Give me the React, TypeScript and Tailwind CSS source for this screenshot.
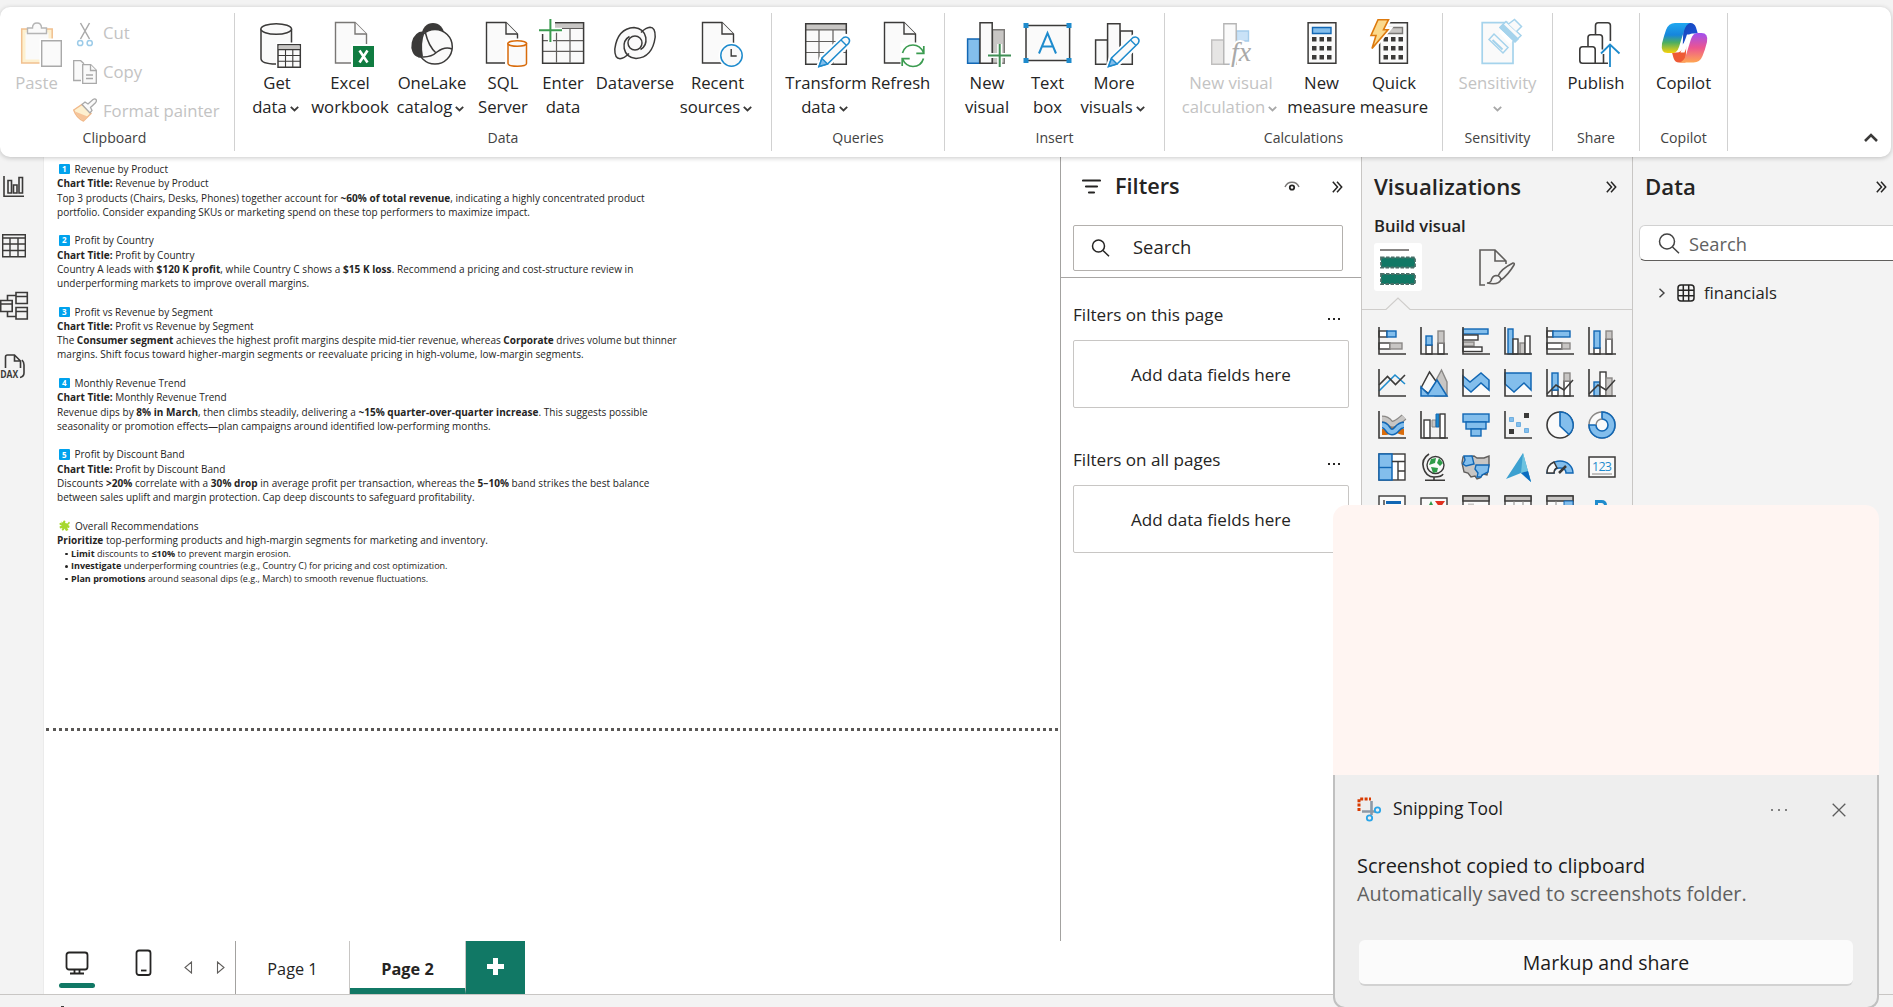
import React from 'react';

const INK = '#3b3a39';
const BLUE = '#1e8bcd';

/* ---------- Ribbon ---------- */

const Chev = ({ className = '' }: { className?: string }) => (
  <svg className={className} width="9" height="6" viewBox="0 0 9 6" fill="none" stroke="currentColor" strokeWidth="1.8">
    <path d="M.8 .8 4.5 4.5 8.2 .8" />
  </svg>
);

type BtnProps = {
  w: string;
  c: number;
  l1: string;
  l2?: string;
  chev?: boolean;
  dim?: boolean;
  children: React.ReactNode;
};

const RibbonButton = ({ w, c, l1, l2, chev, dim, children }: BtnProps) => (
  <div className={`flex shrink-0 flex-col items-center whitespace-nowrap text-[16.7px] leading-6 ${w} ${dim ? 'text-[#c3c3c3]' : 'text-[#242424]'}`}>
    <svg className="shrink-0" width="60" height="54" viewBox={`${c - 30} 17 60 54`} fill="none">
      {children}
    </svg>
    <div className="h-6">{l1}</div>
    <div className={`flex h-6 items-center gap-[3px] ${l2 && chev ? '-ml-[3px]' : ''}`}>
      {l2 && <span>{l2}</span>}
      {chev && <Chev className={dim ? 'mt-1 text-[#a8a8a8]' : 'mt-1 text-[#3b3a39]'} />}
    </div>
  </div>
);

const Group = ({ w, name, pad = '', labelPad = '', children }: { w: string; name: string; pad?: string; labelPad?: string; children: React.ReactNode }) => (
  <div className={`flex h-[138px] shrink-0 flex-col border-r border-[#d1d1d1] ${w}`}>
    <div className={`flex h-[113px] pt-1 ${pad}`}>{children}</div>
    <div className={`text-center text-[14.1px] leading-6 text-[#424242] ${labelPad}`}>{name}</div>
  </div>
);

const Page = ({ x, stroke = INK }: { x: number; stroke?: string }) => (
  <g stroke={stroke} strokeWidth="1.4" fill="#fafafa">
    <path d={`M${x} 22.5h19.5l11.5 11.5v29h-31z`} />
    <path d={`M${x + 19.5} 22.5v11.5h11.5`} />
  </g>
);

const Pencil = ({ x }: { x: number }) => (
  <g transform={`translate(${x} 0)`}>
    <path d="M0 67 3 58 25 37q3-2 5.500 1t.5 5.500L9.500 64.500z" fill="#fafafa" stroke="#fff" strokeWidth="4.500" />
    <path d="M.5 66.500 3.500 58 25 37.500q3-1.500 5 .7t.2 5L9 64z" fill="#fafafa" stroke={BLUE} strokeWidth="1.500" />
    <path d="M.5 66.500 3.500 58.500 9 64z" fill="#83beec" stroke={BLUE} strokeWidth="1.400" />
    <path d="M22.500 40l5.500 5.500" stroke={BLUE} strokeWidth="1.400" />
  </g>
);

const KeyDots = ({ x }: { x: number }) => (
  <g fill={INK}>
    {[0, 1, 2].map((r) =>
      [0, 1, 2].map((k) => <rect key={`${r}${k}`} x={x + k * 7.500} y={37 + r * 9} width="4.500" height="4.500" />),
    )}
  </g>
);

const Ribbon = () => (
  <div className="relative z-10 flex h-[150px] w-[1891px] rounded-[10px] bg-white pt-1.5 shadow-[0_1px_5px_rgba(0,0,0,0.22)]">
    <Group w="w-[235px]" name="Clipboard" labelPad="pr-[5px]">
      <RibbonButton w="w-[73px]" c={36} l1="Paste" dim>
        <path d="M20.700 29h30.500v34H20.700z" fill="#fdf0d0" stroke="#f1c08f" strokeWidth="1.500" />
        <path d="M24.500 32.500h23v27h-23z" fill="#fafafa" />
        <path d="M26.500 33.500v-5.500h5q0-5 4.500-5t4.500 5h5v5.500z" fill="#fafafa" stroke="#b5b5b5" strokeWidth="1.400" />
        <path d="M38.500 38.500h24v30h-24z" fill="#fff" />
        <path d="M40.700 40.700h19.600v25.600H40.700z" fill="#fafafa" stroke="#a9a9a9" strokeWidth="1.400" />
      </RibbonButton>
      <div className="-mt-[2px] flex flex-col text-[16.700px] text-[#c3c3c3]">
        <div className="flex h-[37px] shrink-0 items-center gap-1.5">
          <svg width="24" height="26" viewBox="73 18 24 26" fill="none">
            <path d="M80.500 20 89.500 36M89.500 20 80.500 36" stroke="#a9a9a9" strokeWidth="1.500" />
            <circle cx="80.200" cy="40" r="2.600" stroke="#9ccbe8" strokeWidth="1.500" />
            <circle cx="89.700" cy="40" r="2.600" stroke="#9ccbe8" strokeWidth="1.500" />
          </svg>
          <span className="-mt-px">Cut</span>
        </div>
        <div className="flex h-[39px] shrink-0 items-center gap-1.5">
          <svg width="24" height="26" viewBox="73 57 24 26" fill="#fafafa" stroke="#a9a9a9" strokeWidth="1.300">
            <path d="M81 78.500h-7.300V58.700h7l3.300 3" />
            <path d="M82.700 62.700h8l5.600 5.600v13H82.700z" />
            <path d="M90.500 62.700v5.800h5.800M86 73h7M86 76.500h7" />
          </svg>
          <span className="mt-px">Copy</span>
        </div>
        <div className="flex h-[39px] shrink-0 items-center gap-1.5">
          <svg width="24" height="26" viewBox="73 96 24 26" fill="none">
            <path d="M73.700 108 82 102.500l9 9-7.500 7.500q-7-3-9.800-11z" fill="#fdf0d0" stroke="#f1b98a" strokeWidth="1.400" />
            <path d="M75 109.500l12.500 5-4 4q-6-3-8.500-9z" fill="#f6c499" />
            <path d="m82 102.500 3-2.500 3 2 5-4.500q2-1.300 3 0t-.5 3.200l-5 4.800 1.500 3-2 2.500z" fill="#fafafa" stroke="#a9a9a9" strokeWidth="1.300" />
          </svg>
          <span className="mt-px">Format painter</span>
        </div>
      </div>
    </Group>

    <Group w="w-[537px]" name="Data" pad="pl-[9px]">
      <RibbonButton w="w-[66px]" c={277} l1="Get" l2="data" chev>
        <path d="M261 29.500v29q0 5.500 15 5.500t15.500-5.500v-29z" fill="#fafafa" stroke={INK} strokeWidth="1.500" />
        <ellipse cx="276.200" cy="29" rx="15.300" ry="5.300" fill="#fafafa" stroke={INK} strokeWidth="1.500" />
        <path d="M276 42.500h26v26h-26z" fill="#fff" />
        <path d="M278 44.700h22.300v22.600H278z" fill="#fafafa" stroke={INK} strokeWidth="1.500" />
        <path d="M278.700 45.400h21v4h-21z" fill="#c8c6c4" />
        <path d="M278 49.600h22.300M278 55.500h22.300M278 61.300h22.300M285.500 49.600v17.500M292.800 49.600v17.500" stroke={INK} strokeWidth="1.100" />
      </RibbonButton>
      <RibbonButton w="w-[80px]" c={350} l1="Excel" l2="workbook">
        <Page x={335.5} stroke="#797775" />
        <path d="M351 44h24v24h-24z" fill="#fff" />
        <path d="M353 46h21v21h-21z" fill="#107c41" />
        <path d="m359.500 50.500 8 12M367.500 50.500l-8 12" stroke="#fff" strokeWidth="2.600" />
      </RibbonButton>
      <RibbonButton w="w-[84px]" c={432} l1="OneLake" l2="catalog" chev>
        <circle cx="433" cy="34" r="11" fill={INK} />
        <ellipse cx="421" cy="44.500" rx="9.500" ry="13" fill={INK} transform="rotate(12 421 44.500)" />
        <circle cx="435" cy="46.800" r="17.300" fill="#fafafa" stroke={INK} strokeWidth="1.500" />
        <path d="M424.500 33q-4 10-1.500 23.500l-5-1.500q-4-12 6.500-22z" fill={INK} />
        <path d="M425.500 33q3 13 10.500 20M418 56.500q12 2 19-4.500 8-6 15-3" stroke={INK} strokeWidth="1.500" />
      </RibbonButton>
      <RibbonButton w="w-[58px]" c={503} l1="SQL" l2="Server">
        <Page x={486.5} />
        <path d="M505 38.500h24v30h-24z" fill="#fff" />
        <path d="M508 43.500v20q0 2.700 9.300 2.700t9.200-2.700v-20z" fill="#fafafa" stroke="#d86b0b" strokeWidth="1.500" />
        <ellipse cx="517.200" cy="43.500" rx="9.300" ry="2.800" fill="#fafafa" stroke="#d86b0b" strokeWidth="1.500" />
      </RibbonButton>
      <RibbonButton w="w-[62px]" c={563} l1="Enter" l2="data">
        <path d="M542.600 22.700h41v40.500h-41z" fill="#fafafa" />
        <path d="M552 23.500h31v4.500h-31z" fill="#c8c6c4" />
        <path d="M542.600 28.500h41M542.600 40.700h41M542.600 51.300h41M556.500 28.500v34M570 28.500v34" stroke="#605e5c" strokeWidth="1.200" />
        <path d="M542.600 22.700h41v40.500h-41z" stroke={INK} strokeWidth="1.500" />
        <path d="M538 17h17v17h-17z" fill="#fff" />
        <path d="M539 30.300h23M550.400 19v23" stroke="#fff" strokeWidth="5" />
        <path d="M539 30.300h23M550.400 19v23" stroke="#3a9b4f" strokeWidth="2" />
      </RibbonButton>
      <RibbonButton w="w-[82px]" c={635} l1="Dataverse">
        <g stroke={INK} strokeWidth="1.500" fill="none">
          <path d="M629 53.500Q624 58.500 620 58.700 614.500 58.500 614.800 49 617.500 28.500 634 27.500 644 28.500 645.800 37.500 647 46 640.500 49.500" fill="#fafafa" stroke="none" />
          <path d="M641 32.500Q646 27.500 650 27.300 655.500 27.500 655.200 37 652.500 57.500 636 58.500 626 57.500 624.200 48.500 623 40 629.500 36.500" fill="#fafafa" />
          <path d="M629 53.500Q624 58.500 620 58.700 614.500 58.500 614.800 49 617.500 28.500 634 27.500 644 28.500 645.800 37.500 647 46 640.500 49.500" />
          <circle cx="635" cy="43" r="7" fill="#fafafa" />
        </g>
      </RibbonButton>
      <RibbonButton w="w-[83px]" c={717.5} l1="Recent" l2="sources" chev>
        <Page x={702} />
        <circle cx="731" cy="55.500" r="13" fill="#fff" />
        <circle cx="731" cy="55.500" r="10.700" fill="#fafafa" stroke={BLUE} strokeWidth="1.500" />
        <path d="M730.700 49v7h5.500" stroke={INK} strokeWidth="1.400" />
      </RibbonButton>
    </Group>

    <Group w="w-[173px]" name="Queries" pad="pl-[14px]">
      <RibbonButton w="w-[80px]" c={826} l1="Transform" l2="data" chev>
        <path d="M805.700 23.700h40.600v40.600h-40.600z" fill="#fafafa" />
        <path d="M806 24h40v5.500h-40z" fill="#c8c6c4" />
        <path d="M805.700 29.800h40.600M805.700 41.500h40.600M805.700 52.500h40.600M819 29.800v34M833 29.800v34" stroke="#605e5c" strokeWidth="1.200" />
        <path d="M805.700 23.700h40.600v40.600h-40.600z" stroke={INK} strokeWidth="1.500" />
        <Pencil x={818.5} />
      </RibbonButton>
      <RibbonButton w="w-[69px]" c={900.5} l1="Refresh">
        <Page x={884} />
        <path d="M900 42.500h26v25h-26z" fill="#fff" />
        <path d="M902 53q2.500-8 10.500-8 7 0 10.500 7.500M923 58.500q-2.500 8-10.500 8-7 0-10.500-7.500M923.300 46v7.300h-7.500M901.700 66v-7.300h7.500" stroke="#3a9b4f" strokeWidth="1.700" />
      </RibbonButton>
    </Group>

    <Group w="w-[220px]" name="Insert" pad="pl-[17px]">
      <RibbonButton w="w-[50px]" c={987} l1="New" l2="visual">
        <path d="M992.500 29.700h11.800v33.500h-11.800z" fill="#c8c6c4" stroke="#797775" strokeWidth="1.400" />
        <path d="M967.600 39h12v24.200h-12z" fill="#83beec" stroke="#1267b4" strokeWidth="1.500" />
        <path d="M980 22.700h12.200v40.500H980z" fill="#fafafa" stroke={INK} strokeWidth="1.500" />
        <path d="M988 55.600h23M999.700 44v23" stroke="#fff" strokeWidth="5" />
        <path d="M988 55.600h23M999.700 44v23" stroke="#3f8f55" strokeWidth="2" />
      </RibbonButton>
      <RibbonButton w="w-[71px]" c={1047.5} l1="Text" l2="box">
        <path d="M1025.500 25.600h43.600v34.800h-43.600z" fill="#fafafa" stroke={INK} strokeWidth="1.500" />
        <path d="M1023 23h5v5h-5zM1066 23h5v5h-5zM1023 58h5v5h-5zM1066 58h5v5h-5z" fill={BLUE} />
        <path d="M1038.500 53.500 1047 33l8.500 20.500M1041.500 46.500h11" stroke={BLUE} strokeWidth="2" />
      </RibbonButton>
      <RibbonButton w="w-[62px]" c={1114} l1="More" l2="visuals" chev>
        <path d="M1120 31h12.300v33.300H1120z" fill="#fafafa" stroke={INK} strokeWidth="1.500" />
        <path d="M1095.600 40h12v24.300h-12z" fill="#fafafa" stroke={INK} strokeWidth="1.500" />
        <path d="M1107.600 23.700h12.400v40.600h-12.400z" fill="#fafafa" stroke={INK} strokeWidth="1.500" />
        <Pencil x={1108} />
      </RibbonButton>
    </Group>

    <Group w="w-[278px]" name="Calculations" pad="pl-[14px]">
      <RibbonButton w="w-[104px]" c={1231} l1="New visual" l2="calculation" chev dim>
        <path d="M1211.700 40h12v24.300h-12z" fill="#e6e5e4" stroke="#c0bfbe" strokeWidth="1.400" />
        <path d="M1236.500 31h12v10h-12z" fill="#c9e2f7" stroke="#a5cdec" strokeWidth="1.400" />
        <path d="M1223.800 23.700h12.400v40.600h-12.400z" fill="#fafafa" stroke="#b5b5b5" strokeWidth="1.400" />
        <text x="1231" y="61" fontFamily="Liberation Serif" fontStyle="italic" fontSize="28" fill="#a9a9a9" stroke="#fff" strokeWidth="4" paintOrder="stroke">fx</text>
      </RibbonButton>
      <RibbonButton w="w-[77px]" c={1321.5} l1="New" l2="measure">
        <path d="M1307.600 22.700h27.800v40.600h-27.800z" fill="#fafafa" stroke={INK} strokeWidth="1.500" />
        <path d="M1312 27.500h18.500v6H1312z" fill="#83beec" stroke="#1267b4" strokeWidth="1.400" />
        <KeyDots x={1311.5} />
      </RibbonButton>
      <RibbonButton w="w-[68px]" c={1394} l1="Quick" l2="measure">
        <path d="M1379.600 22.700h27.800v40.600h-27.800z" fill="#fafafa" stroke={INK} strokeWidth="1.500" />
        <path d="M1384 27.500h18.500v6H1384z" fill="#c8c6c4" stroke="#797775" strokeWidth="1.400" />
        <KeyDots x={1383.5} />
        <path d="M1378 19.500h11l-5 9.500h4.500l-16 19.500 3.500-13h-5z" fill="#fff" stroke="#fff" strokeWidth="5" />
        <path d="M1378 19.700h10.500l-5 10h4.500l-16 18.800 4-13h-5z" fill="#fbd98b" stroke="#dd7a0e" strokeWidth="1.600" />
      </RibbonButton>
    </Group>

    <Group w="w-[110px]" name="Sensitivity" pad="justify-center">
      <RibbonButton w="w-[90px]" c={1497.5} l1="Sensitivity" chev dim>
        <path d="M1481.700 22.700h30.800v40.600h-30.800z" fill="#fafafa" stroke="#a5d3ec" strokeWidth="1.700" />
        <path d="m1498 32 8-9 8-6 10 8-6 10-9 9z" fill="#fff" />
        <g stroke="#a5d3ec" strokeWidth="1.500" fill="#fafafa">
          <path d="m1488.500 39.500 5-5.500 14 13.500-5 5.500z" />
          <path d="m1492 40 10 9.500" strokeWidth="2" />
          <path d="m1499.500 27.500 6-6 15 14-6 6z" />
          <path d="m1499.500 27.500 3-3 15 14.500-3 3z" fill="#a5d3ec" />
          <path d="m1508 24 6-4.500 7 7-5 5" />
        </g>
      </RibbonButton>
    </Group>

    <Group w="w-[87px]" name="Share" pad="justify-center">
      <RibbonButton w="w-[80px]" c={1596} l1="Publish">
        <g stroke={INK} strokeWidth="1.600" fill="none">
          <path d="M1595.500 35v-9.500q0-2.700 2.700-2.700h9.500q2.700 0 2.700 2.700V41" />
          <path d="M1588 47v-9.500q0-2.700 2.700-2.700h9q2.700 0 2.700 2.700v12M1603.500 54v9.300" />
          <path d="M1608 63.300h-25.500q-2.700 0-2.700-2.700V49.500q0-2.700 2.700-2.700h10q2.700 0 2.700 2.700v13.700" />
        </g>
        <path d="M1610 67V44.500M1601 53.500l9-9 9.500 9" stroke={BLUE} strokeWidth="1.800" />
      </RibbonButton>
    </Group>

    <Group w="w-[88px]" name="Copilot" pad="justify-center">
      <RibbonButton w="w-[80px]" c={1683.5} l1="Copilot">
        <defs>
          <linearGradient id="cpA" x1="0" y1="0" x2="0" y2="1">
            <stop offset="0" stopColor="#20a8f0" />
            <stop offset=".4" stopColor="#1685dc" />
            <stop offset=".65" stopColor="#4cae62" />
            <stop offset="1" stopColor="#f8d20a" />
          </linearGradient>
          <linearGradient id="cpB" x1="0" y1="0" x2="0" y2="1">
            <stop offset="0" stopColor="#a04ff0" />
            <stop offset=".5" stopColor="#ec5590" />
            <stop offset="1" stopColor="#ffa652" />
          </linearGradient>
          <linearGradient id="cpC" x1="0" y1="0" x2="1" y2="1">
            <stop offset="0" stopColor="#1546b8" />
            <stop offset="1" stopColor="#1d56e0" />
          </linearGradient>
        </defs>
        <path d="M1683 23h7q4 0 5.500 4.500l1.800 6h-5q-4 0-6 5l-4 6z" fill="url(#cpC)" />
        <path d="M1685 62.500h-6.500q-4 0-5.500-4.500l-1.500-5.500h5q4 0 6-5l3.500-6z" fill="#ee5a35" />
        <path d="M1674.500 23h15q-4 1-6 8l-5 16q-2 6-6.500 6h-5q-7 0-5.500-9.500 2-8 4-13.500 2.500-7 9-7z" fill="url(#cpA)" />
        <path d="M1693 62.500h-14.500q5-1 7-7.500l5-16q2-6 6.500-6h4q7 0 5.500 9-2 8-4.500 14-2.500 6.500-9 6.500z" fill="url(#cpB)" />
        <path d="M1686.500 34.500h4.500l-7 18h-4z" fill="#fff" />
      </RibbonButton>
    </Group>

    <div className="flex flex-1 items-end justify-end pb-[15px] pr-[13px]">
      <svg width="14" height="9" viewBox="0 0 14 9" fill="none" stroke={INK} strokeWidth="2.600">
        <path d="M1 8l6-6 6 6" />
      </svg>
    </div>
  </div>
);

/* ---------- Left rail ---------- */

const Rail = () => (
  <div className="w-[44px] shrink-0 overflow-hidden border-r border-[#ebebeb] bg-[#f3f3f3]">
    <svg width="44" height="240" viewBox="0 157 44 240" fill="none" stroke={INK} strokeWidth="1.600">
      <path d="M4 176v20.200h20M8 180.500h3.500v12.500H8zM13.500 185h3.500v8h-3.500zM19 177.500h3.500V193H19z" />
      <path d="M2.700 234.700h22.600v22H2.700zM2.700 238h22.600M2.700 244h22.600M2.700 250.500h22.600M10 238v18.500M18 238v18.500" strokeWidth="1.400" />
      <path d="M.7 300.500h11.500v11H.7zM.7 304h11.500M16 292.500h11.300v11H16zM16 296.500h11.300M16 307.500h11.300v11.500H16zM16 311.500h11.300M7.500 300v-4.500H16M7.500 312v4.500H16" />
      <path d="M5.500 368v-11q0-2 2-2h7l6 6v7M14.500 355v6h6M22 360q2 2 2 5v8q0 3.500-4 4.500" />
      <text x="0.200" y="377.500" fontSize="10" fontWeight="700" fill={INK} stroke="none" textLength="18" lengthAdjust="spacingAndGlyphs">DAX</text>
    </svg>
  </div>
);

/* ---------- Canvas ---------- */

const B = ({ children }: { children: React.ReactNode }) => <b className="font-bold">{children}</b>;

const Block = ({ n, title, children }: { n: number; title: string; children: React.ReactNode }) => (
  <div className="h-[71.35px]">
    <div className="flex items-center pl-[2px]">
      <span className="mr-[5px] flex h-[10.500px] w-[10.500px] items-center justify-center rounded-[1px] bg-[#00a2ed] text-[8px] font-bold leading-none text-white">{n}</span>
      {title}
    </div>
    <div><B>Chart Title:</B> {title}</div>
    {children}
  </div>
);

const Bullet = ({ children }: { children: React.ReactNode }) => (
  <li className="flex items-center gap-[3.500px]">
    <i className="h-[2.500px] w-[2.500px] rounded-full bg-[#252423]" />
    <span>{children}</span>
  </li>
);

const Canvas = () => (
  <div className="flex flex-1 flex-col bg-white">
    <div className="h-[572px] overflow-hidden whitespace-nowrap pl-[13px] pt-[5px] text-[10.020px] leading-[14.270px] text-[#252423]">
      <Block n={1} title="Revenue by Product">
        <div className="tracking-[0.025px]">Top 3 products (Chairs, Desks, Phones) together account for <B>~60% of total revenue</B>, indicating a highly concentrated product</div>
        <div>portfolio. Consider expanding SKUs or marketing spend on these top performers to maximize impact.</div>
      </Block>
      <Block n={2} title="Profit by Country">
        <div className="tracking-[0.045px]">Country A leads with <B>$120 K profit</B>, while Country C shows a <B>$15 K loss</B>. Recommend a pricing and cost-structure review in</div>
        <div>underperforming markets to improve overall margins.</div>
      </Block>
      <Block n={3} title="Profit vs Revenue by Segment">
        <div className="tracking-[-0.015px]">The <B>Consumer segment</B> achieves the highest profit margins despite mid-tier revenue, whereas <B>Corporate</B> drives volume but thinner</div>
        <div className="tracking-[0.03px]">margins. Shift focus toward higher-margin segments or reevaluate pricing in high-volume, low-margin segments.</div>
      </Block>
      <Block n={4} title="Monthly Revenue Trend">
        <div className="tracking-[0.03px]">Revenue dips by <B>8% in March</B>, then climbs steadily, delivering a <B>~15% quarter-over-quarter increase</B>. This suggests possible</div>
        <div>seasonality or promotion effects—plan campaigns around identified low-performing months.</div>
      </Block>
      <Block n={5} title="Profit by Discount Band">
        <div className="tracking-[0.035px]">Discounts <B>&gt;20%</B> correlate with a <B>30% drop</B> in average profit per transaction, whereas the <B>5–10%</B> band strikes the best balance</div>
        <div>between sales uplift and margin protection. Cap deep discounts to safeguard profitability.</div>
      </Block>
      <div className="flex items-center pl-[2px]">
        <svg className="mr-[5px]" width="11" height="11" viewBox="0 0 11 11" fill="#a6d82e">
          <path d="M2 1.500 4 2.500Q4 0 6 .8 7 1.500 6 3l2.500.5L10 1.500l1 1.500L9 5q2 .5 1.500 2T8 7.500L9.500 10 7 11 5.500 8.500Q5 11 3.500 10.500T3.500 8L1 8.500.5 6.500 3 5.500Q0 5 .5 3.500T3 3.500z" />
        </svg>
        Overall Recommendations
      </div>
      <div className="tracking-[0.035px]"><B>Prioritize</B> top-performing products and high-margin segments for marketing and inventory.</div>
      <ul className="pl-[8px] pt-[0.700px] text-[9.020px] leading-[12.500px]">
        <Bullet><span className="tracking-[0.05px]"><B>Limit</B> discounts to <B>≤10%</B> to prevent margin erosion.</span></Bullet>
        <Bullet><B>Investigate</B> underperforming countries (e.g., Country C) for pricing and cost optimization.</Bullet>
        <Bullet><B>Plan promotions</B> around seasonal dips (e.g., March) to smooth revenue fluctuations.</Bullet>
      </ul>
    </div>
    <div className="mx-[2px] -mt-[1px] h-[3px] border-t-[3px] border-dotted border-[#5a5856]" />
  </div>
);

/* ---------- Filters ---------- */

const Chevrons = () => (
  <svg width="11" height="12" viewBox="0 0 11 12" fill="none" stroke="#252423" strokeWidth="1.500">
    <path d="M.8 .8 5.500 6 .8 11.200M5 .8 9.700 6 5 11.200" />
  </svg>
);

const FilterSection = ({ title }: { title: string }) => (
  <div className="h-[145px] text-[17.100px] text-[#252423]">
    <div className="flex h-6 items-center justify-between pl-3 pr-[21px]">
      <span>{title}</span>
      <span className="flex gap-[3px] pt-2">
        <i className="h-[2px] w-[2px] bg-[#252423]" />
        <i className="h-[2px] w-[2px] bg-[#252423]" />
        <i className="h-[2px] w-[2px] bg-[#252423]" />
      </span>
    </div>
    <div className="ml-3 mt-[13px] flex h-[68px] w-[276px] items-center justify-center rounded-[2px] border border-[#c8c6c4] bg-white pt-px">Add data fields here</div>
  </div>
);

const Filters = () => (
  <div className="h-[784px] w-[301px] shrink-0 border-l border-[#a3a2a0] bg-white text-[#252423]">
    <div className="flex h-[59px] items-center pl-[21px] pr-[18px]">
      <svg width="19" height="16" viewBox="0 0 19 16" stroke="#252423" strokeWidth="2.200" strokeLinecap="round">
        <path d="M1 1.500h17M4 7.500h11M7 13.500h5" />
      </svg>
      <span className="ml-[14px] flex-1 text-[21.700px] font-semibold">Filters</span>
      <svg className="mr-[32px]" width="16" height="11" viewBox="0 0 16 11" fill="none">
        <path d="M1 6Q3 1.200 8 1.200T15 6" stroke="#797775" strokeWidth="1.400" />
        <circle cx="8" cy="6.500" r="2.200" stroke="#252423" strokeWidth="1.800" />
      </svg>
      <Chevrons />
    </div>
    <div className="border-b border-[#a8a6a4] pb-[6px] pl-3 pt-[9px]">
      <div className="flex h-[46px] w-[270px] items-center rounded-[2px] border border-[#b3b0ad] pl-[17px] text-[18.400px]">
        <svg className="mr-[23px] -mt-px" width="19" height="18" viewBox="0 0 19 18" fill="none" stroke="#252423" strokeWidth="1.500">
          <circle cx="7.500" cy="7" r="6" />
          <path d="M12 11.500 18 17.200" />
        </svg>
        <span className="-mt-[3px]">Search</span>
      </div>
    </div>
    <div className="pt-[25px]">
      <FilterSection title="Filters on this page" />
      <FilterSection title="Filters on all pages" />
    </div>
  </div>
);

/* ---------- Visualizations ---------- */

const D = '#3b3a39';
const DB = '#1267b4';
const LB = '#83beec';
const G = '#c8c6c4';
const GS = '#8a8886';

const Axis = () => <path d="M1 0v27h27" stroke={D} strokeWidth="1.600" fill="none" />;
const R = ({ x, y, w, h, f = '#fff', s = D }: { x: number; y: number; w: number; h: number; f?: string; s?: string }) => (
  <rect x={x} y={y} width={w} height={h} fill={f} stroke={s} strokeWidth="1.400" />
);

const visuals: React.ReactNode[] = [
  <><R x={1} y={4} w={8} h={6} /><R x={9} y={4} w={9} h={6} f={LB} s={DB} /><R x={1} y={16} w={11} h={6} /><R x={12} y={16} w={12} h={6} f={G} s={GS} /><Axis /></>,
  <><R x={6} y={18} w={6} h={9} /><R x={6} y={9} w={6} h={9} f={LB} s={DB} /><R x={18} y={16} w={6} h={11} /><R x={18} y={4} w={6} h={12} f={G} s={GS} /><Axis /></>,
  <><R x={1} y={2} w={25} h={5} f={LB} s={DB} /><R x={1} y={8} w={15} h={5} /><R x={1} y={15} w={11} h={4} f={G} s={GS} /><R x={1} y={20} w={19} h={4.5} /><Axis /></>,
  <><R x={4} y={2} w={5} h={25} f={LB} s={DB} /><R x={9} y={12} w={5} h={15} /><R x={16} y={16} w={5} h={11} f={G} s={GS} /><R x={21} y={9} w={5} h={18} /><Axis /></>,
  <><R x={1} y={4} w={6} h={6} /><R x={7} y={4} w={17} h={6} f={LB} s={DB} /><R x={1} y={16} w={15} h={6} /><R x={16} y={16} w={8} h={6} f={G} s={GS} /><Axis /></>,
  <><R x={6} y={21} w={6} h={6} /><R x={6} y={4} w={6} h={17} f={LB} s={DB} /><R x={18} y={12} w={6} h={15} /><R x={18} y={4} w={6} h={8} f={G} s={GS} /><Axis /></>,
  <><path d="M1 22 17 6l10 9" stroke={BLUE} strokeWidth="1.600" fill="none" /><path d="M1 16 9.500 7.500l8 8L27 6" stroke={D} strokeWidth="1.600" fill="none" /><Axis /></>,
  <><path d="M15 13 21.500 1 27 13v14H15z" fill={G} stroke={GS} strokeWidth="1.400" /><path d="M1 19 9.500 3l7 10-7 12z" fill="#fafafa" stroke={D} strokeWidth="1.500" /><path d="M1 18l7 7 9-14 10 16H1z" fill={LB} stroke={DB} strokeWidth="1.500" /></>,
  <><path d="M1 16l9 7 9-8 8 7v5H1z" fill="#fafafa" /><path d="M1 7l7 6 11-9 8 7v10l-8-7-10 9-8-7z" fill={LB} stroke={DB} strokeWidth="1.500" /><Axis /></>,
  <><path d="M1 16l9 7 9-9 8 7v6H1z" fill="#fafafa" /><path d="M1 4h26v17l-7-7-10 9-9-8z" fill={LB} stroke={DB} strokeWidth="1.500" /><Axis /></>,
  <><R x={6} y={21} w={6} h={6} /><R x={6} y={4} w={6} h={17} f={LB} s={DB} /><R x={18} y={12} w={6} h={15} /><R x={18} y={4} w={6} h={8} f={G} s={GS} /><path d="M1 25l9-9 8 5 9-10" stroke={D} strokeWidth="1.500" fill="none" /><Axis /></>,
  <><R x={6} y={13} w={6} h={14} f={LB} s={DB} /><R x={12} y={3} w={6} h={24} /><R x={18} y={9} w={6} h={18} f={G} s={GS} /><path d="M1 25l9-9 8 5 9-10" stroke={D} strokeWidth="1.500" fill="none" /><Axis /></>,
  <><path d="M4 21h4c3 0 2-5 6-5s5 5 12 5" stroke="#d86b0b" strokeWidth="6" fill="none" /><path d="M4 8q5 0 8 4t14-6" stroke={GS} strokeWidth="7" fill="none" /><path d="M4 8q5 0 8 4t14-6" stroke={G} strokeWidth="4.500" fill="none" /><path d="M4 14c6 0 5 7 10 7s5-7 12-7" stroke={DB} strokeWidth="7" fill="none" /><path d="M4 14c6 0 5 7 10 7s5-7 12-7" stroke={LB} strokeWidth="4" fill="none" /><Axis /></>,
  <><R x={4} y={9} w={6} h={18} /><path d="M12 9h4v7h-4z" fill={G} stroke={GS} /><path d="M16 3h3v13h-3z" fill={BLUE} stroke={DB} /><R x={20} y={3} w={5} h={24} /><Axis /></>,
  <><R x={1} y={3} w={26} h={8} f={LB} s={DB} /><R x={4} y={11} w={20} h={7} f={LB} s={DB} /><R x={9} y={18} w={10} h={7} f={LB} s={DB} /></>,
  <><path d="M20 2h5v5h-5zM5 18h5v5H5z" fill={D} /><path d="M5.500 6.500h4v4h-4zM12.500 11.500h4v4h-4zM20.500 17.500h4v4h-4z" fill={LB} stroke="#5aa3dc" strokeWidth=".8" /><Axis /></>,
  <><circle cx="14" cy="14" r="13" fill="#fafafa" stroke={D} strokeWidth="1.600" /><path d="M14 1a13 13 0 0 1 9 22.500L14 15z" fill={LB} stroke={DB} strokeWidth="1.600" /></>,
  <><circle cx="14" cy="14" r="13" fill="#fafafa" stroke={GS} strokeWidth="1.500" /><path d="M14 1A13 13 0 1 1 1 14h7a6 6 0 1 0 6-6z" fill={LB} stroke={DB} strokeWidth="1.600" /><path d="M8 14a6 6 0 0 1 6-6" fill="none" stroke={GS} strokeWidth="1.500" /></>,
  <><R x={1} y={1} w={26} h={26} /><path d="M1 1h13v26H1z" fill={LB} stroke={DB} strokeWidth="1.500" /><path d="M1 14.500h13" stroke={DB} strokeWidth="1.400" /><path d="M14 8.500h13M20 8.500V27M20 18h7" stroke={D} strokeWidth="1.400" /></>,
  <><circle cx="15.500" cy="12" r="8.500" fill="#fafafa" stroke={D} strokeWidth="1.400" /><path d="M11 6l5-1-1 5-6 2zM19 5l4 5-3 3-3-3zM11 14l7 1-1 4-4 1z" fill="#2e9b49" /><path d="M9 1Q1 6 3.500 15T14 24t9-3M14 24v3M5 27.200h20" stroke={D} strokeWidth="1.600" fill="none" /></>,
  <><path d="M1 4h4l7-1 3 2h7l5-2v9l-2 10-4-1-3 4-3 1-2-3-4 1-3-4-4-1-2-9z" fill={G} stroke="#605e5c" strokeWidth="1.400" /><path d="M2 3h8l2 8-8 2-3-2 2-4zM14 12h13l-1 7-6 3-1 2h-4l1-4-3-4z" fill={LB} stroke={DB} strokeWidth="1.400" /></>,
  <><path d="M19 0 27 29 17 20 2 26z" fill="#3ca0d0" /><path d="M19 0 27 29 17 20z" fill="#6cc3e0" /><path d="M17 20l10 9-3-11z" fill="#0b6cc0" /></>,
  <><path d="M1 20a13 12 0 0 1 26 0h-7q0-5-6-5t-6 5z" fill={LB} stroke={DB} strokeWidth="1.500" /><path d="M1 20Q1 12 8 9l3 6q-3 1-3 5z" fill="#fafafa" stroke={D} strokeWidth="1.500" /><path d="M13 20 20 13" stroke={D} strokeWidth="2.500" /></>,
  <><rect x="1" y="4" width="26" height="20" fill="#fafafa" stroke={D} strokeWidth="1.500" /><text x="4" y="18" fontSize="12.500" fill={BLUE} textLength="20">123</text><path d="M4 21h20" stroke={GS} /></>,
  <><R x={1} y={1} w={26} h={26} f="#fafafa" /><path d="M6 5v10" stroke={D} strokeWidth="1.400" /><path d="M8 6h15v3H8z" fill={DB} /></>,
  <><R x={1} y={3} w={26} h={24} f="#fafafa" /><path d="M8 12l3-6 3 6z" fill="#2e9b49" /><path d="M15 6h10l-5 7z" fill="#e0301e" /></>,
  <><R x={1} y={1} w={26} h={26} f="#fafafa" /><path d="M1 1h26v5H1z" fill={G} stroke={D} strokeWidth="1.400" /><path d="M6 9.500h6" stroke={G} strokeWidth="2" /></>,
  <><R x={1} y={1} w={26} h={26} f="#fafafa" /><path d="M1 1h26v5H1z" fill={G} stroke={D} strokeWidth="1.400" /><path d="M10 6v20M19 6v20" stroke={GS} /></>,
  <><R x={1} y={1} w={26} h={26} f="#fafafa" /><path d="M1 1h26v5H1z" fill={G} stroke={D} strokeWidth="1.400" /><path d="M18 6h9v9h-9z" fill={LB} stroke={DB} /><path d="M10 6v20" stroke={GS} /></>,
  <><path d="M8.500 15V6.500h5q4 0 4 4" fill="none" stroke={BLUE} strokeWidth="3" /></>,
];

const Visualizations = () => (
  <div className="w-[271px] shrink-0 border-l border-[#c8c6c4] bg-[#f3f3f3] text-[#252423]">
    <div className="flex h-[59px] items-center justify-between pl-[12px] pr-[15px]">
      <span className="text-[22.200px] font-semibold">Visualizations</span>
      <Chevrons />
    </div>
    <div className="flex h-[27px] items-center pl-[12px] text-[16.600px] font-semibold leading-5">
      <span className="-mt-[8px]">Build visual</span>
    </div>
    <div className="flex h-[48px] pl-[12px]">
      <div className="h-12 w-12 rounded-[3px] bg-white">
        <svg width="48" height="48" viewBox="0 0 48 48">
          <path d="M6 7h29" stroke="#605e5c" strokeWidth="1.500" />
          <rect x="7" y="14.500" width="34" height="10" fill="#117865" stroke="#4a6f68" strokeWidth="1.800" strokeDasharray="3.500 1.500" />
          <rect x="7" y="31" width="34" height="10" fill="#117865" stroke="#4a6f68" strokeWidth="1.800" strokeDasharray="3.500 1.500" />
        </svg>
      </div>
      <svg className="ml-[56px] mt-[5px]" width="38" height="39" viewBox="0 0 38 39" fill="none" stroke="#605e5c" strokeWidth="1.600">
        <path d="M7 37H2V2h15l11 11v3M17 2v11h11" />
        <path d="M20 28q3-7 15-13 2 0 1 2-6 10-13 15M9 35q3 0 4-2 1-5 5-5.500 4 0 5 4-2 6-14 3.500z" />
      </svg>
    </div>
    <svg className="mt-[6px] block" width="270" height="14" viewBox="0 0 270 14" fill="none" stroke="#cfcdcb" strokeWidth="1.200">
      <path d="M0 12.500h24L36 1l12 11.500h222" />
    </svg>
    <div className="grid grid-cols-[repeat(6,42px)] auto-rows-[42px] pl-[16px] pt-[16px]">
      {visuals.map((v, i) => (
        <svg key={i} width="29" height="29" viewBox="0 0 29 29" className="overflow-visible">
          {v}
        </svg>
      ))}
    </div>
  </div>
);

/* ---------- Data ---------- */

const DataPane = () => (
  <div className="min-w-0 flex-1 overflow-hidden border-l border-[#c8c6c4] bg-[#f3f3f3] text-[#252423]">
    <div className="flex h-[59px] items-center justify-between pl-[12px] pr-[6px]">
      <span className="text-[22.200px] font-semibold">Data</span>
      <Chevrons />
    </div>
    <div className="ml-[6px] mt-[9px] flex h-[36px] w-[300px] items-center rounded-[6px] border border-[#d1d1d1] border-b-[#605e5c] bg-white pl-[18px] text-[18.300px] text-[#616161]">
      <svg className="mr-[9px]" width="22" height="21" viewBox="0 0 22 21" fill="none" stroke="#424242" strokeWidth="1.500">
        <circle cx="9" cy="8.500" r="7.500" />
        <path d="M14.500 14 21 20.300" />
      </svg>
      <span className="pt-px">Search</span>
    </div>
    <div className="mt-[20px] flex h-6 items-center pl-[25px] text-[16.600px]">
      <svg className="mr-[11px]" width="8" height="10" viewBox="0 0 8 10" fill="none" stroke="#424242" strokeWidth="1.400">
        <path d="M1.500 .8 6 5 1.500 9.200" />
      </svg>
      <svg className="mr-[9px]" width="18" height="18" viewBox="0 0 18 18" fill="none" stroke="#252423" strokeWidth="1.500">
        <rect x="1" y="1" width="16" height="16" rx="3" />
        <path d="M1 6.300h16M1 11.700h16M6.300 1v16M11.700 1v16" />
      </svg>
      financials
    </div>
  </div>
);

/* ---------- Page tabs ---------- */

const PageBar = () => (
  <div className="flex h-[53px] bg-white text-[16.300px] text-[#252423]">
    <div className="flex w-[192px] border-r border-[#a3a2a0]">
      <div className="ml-[15px] flex w-[36px] flex-col items-center pt-[10px]">
        <svg width="24" height="24" viewBox="0 0 24 24" fill="none" stroke="#252423" strokeWidth="1.800">
          <rect x="1.500" y="1.500" width="21" height="17" rx="2.500" />
          <path d="M9.500 18.500v3.500M14.500 18.500v3.500M5 22.500h14" />
        </svg>
        <div className="mt-[8px] h-[5px] w-[36px] rounded-full bg-[#117865]" />
      </div>
      <svg className="ml-[40px] mt-[8px]" width="18" height="28" viewBox="0 0 18 28" fill="none" stroke="#252423" strokeWidth="1.800">
        <rect x="1.500" y="1.500" width="14" height="24.500" rx="2.500" />
        <path d="M6 21.500h5.500" />
      </svg>
      <svg className="ml-[31px] mt-[20px]" width="42" height="13" viewBox="0 0 42 13" fill="none" stroke="#605e5c" strokeWidth="1.100">
        <path d="M7.500 1v11L1 6.500zM33.500 1v11L40 6.500z" />
      </svg>
    </div>
    <div className="flex w-[114px] items-center justify-center border-r border-[#c8c6c4] pt-[3px]">Page 1</div>
    <div className="flex w-[116px] items-center justify-center border-b-[6px] border-r border-b-[#117865] border-r-[#c8c6c4] pt-[9px] font-bold">Page 2</div>
    <div className="flex w-[59px] items-center justify-center bg-[#117865] pb-[2px]">
      <svg width="17" height="17" viewBox="0 0 17 17" stroke="#fff" strokeWidth="5">
        <path d="M8.500 0v17M0 8.500h17" />
      </svg>
    </div>
  </div>
);

/* ---------- Toast ---------- */

const Toast = () => (
  <div className="absolute left-[1333px] top-[505px] z-20 w-[546px]">
    <div className="h-[270px] rounded-t-[14px] bg-[#fff5f2]" />
    <div className="h-[234px] rounded-b-[12px] border-x-2 border-b-2 border-[#c0c0c0] bg-[#eeeeee] px-[22px] text-[#1b1b1b]">
      <div className="flex h-[68px] items-center pr-[9px]">
        <svg width="25" height="25" viewBox="0 0 25 25" fill="none">
          <path d="M14.500 4v14M5 14.500h13" stroke="#8d99a5" strokeWidth="2.600" />
          <path d="M2 14V2h12" stroke="#d83b01" strokeWidth="3" strokeDasharray="3 1.400" />
          <circle cx="20.500" cy="13" r="2.700" stroke="#2aa5e8" strokeWidth="1.800" />
          <circle cx="12.500" cy="21" r="2.700" stroke="#2aa5e8" strokeWidth="1.800" />
        </svg>
        <span className="-mt-px ml-[11px] flex-1 text-[17.400px]">Snipping Tool</span>
        <span className="mr-[45px] mt-[2px] flex gap-[5px]">
          <i className="h-[2px] w-[2px] rounded-full bg-[#5d5d5d]" />
          <i className="h-[2px] w-[2px] rounded-full bg-[#5d5d5d]" />
          <i className="h-[2px] w-[2px] rounded-full bg-[#5d5d5d]" />
        </span>
        <svg className="mt-[2px]" width="14" height="14" viewBox="0 0 14 14" stroke="#5d5d5d" strokeWidth="1.300">
          <path d="M.7 .7l12.600 12.600M13.300 .7.7 13.300" />
        </svg>
      </div>
      <div className="mt-[9px] text-[19.950px] leading-7">Screenshot copied to clipboard</div>
      <div className="text-[19.800px] leading-7 text-[#606060]">Automatically saved to screenshots folder.</div>
      <div className="ml-[2px] mt-[32px] flex h-[46px] w-[494px] items-center justify-center rounded-[6px] border-b-2 border-[#d2d2d2] bg-[#fbfbfb] pt-px text-[19.500px]">Markup and share</div>
    </div>
  </div>
);

export default function App() {
  return (
    <div className="relative flex h-[1007px] w-[1893px] flex-col overflow-hidden bg-[#f3f3f3] pt-[7px] font-['Open_Sans','Noto_Sans',sans-serif]">
      <Ribbon />
      <div className="flex h-[837px] shrink-0">
        <Rail />
        <div className="flex w-[1317px] shrink-0 flex-col">
          <div className="flex h-[784px] shrink-0">
            <Canvas />
            <Filters />
          </div>
          <PageBar />
        </div>
        <Visualizations />
        <DataPane />
      </div>
      <div className="h-[13px] shrink-0 border-t border-[#c8c6c4] pl-[61px]">
        <div className="mt-[11px] h-px w-[3px] bg-[#3b3a39]" />
      </div>
      <Toast />
    </div>
  );
}
